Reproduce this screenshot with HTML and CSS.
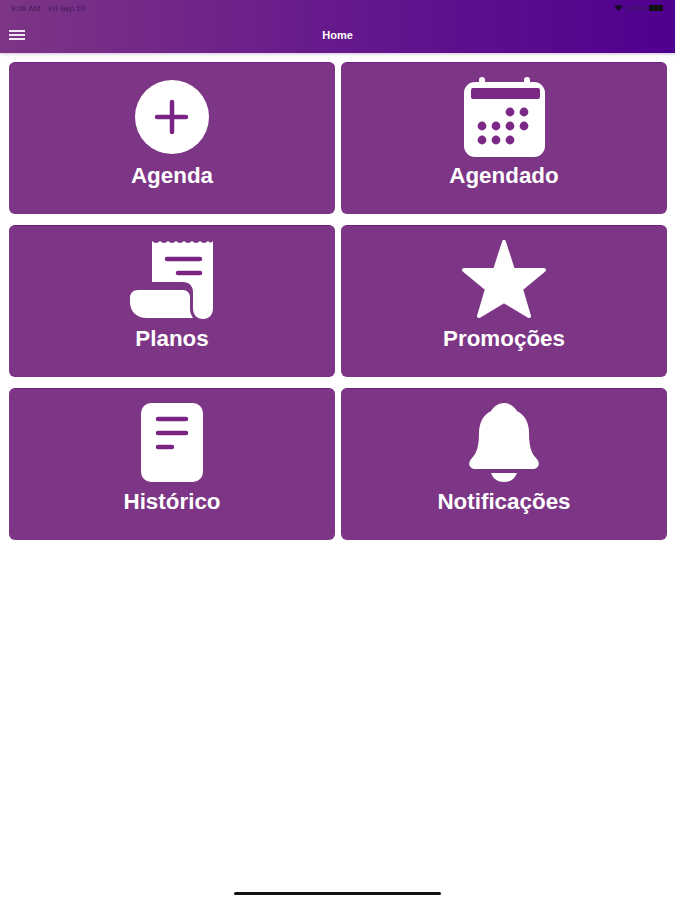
FILE: index.html
```html
<!DOCTYPE html>
<html lang="en">
<head>
	<meta charset="utf-8">
	<title>Home</title>
	<link rel="stylesheet" href="styles.css">
</head>
<body>
	<div class="page">
		<header class="top">
			<div class="status">
				<span class="status-time">9:09 AM<b></b>Fri Sep 10</span>
				<span class="status-right">
					<svg class="wifi" viewBox="0 0 10 7"><path d="M0 1.5C3 -0.5 7 -0.5 10 1.5L5 7Z"/></svg>
					<span>100%</span>
					<i class="battery"></i>
				</span>
			</div>
			<div class="nav">
				<div class="menu"><i></i><i></i><i></i></div>
				<div class="title">Home</div>
			</div>
		</header>

		<main class="grid">
			<a class="card">
				<svg class="icon" viewBox="0 0 90 80">
					<circle cx="45" cy="40" r="37" fill="#fff"/>
					<path class="cut" d="M30 40H59M45 25V55"/>
				</svg>
				<span class="label">Agenda</span>
			</a>
			<a class="card">
				<svg class="icon" viewBox="0 0 90 80">
					<path d="M23 9V3M68 9V3" stroke="#fff" stroke-width="6" stroke-linecap="round"/>
					<rect x="5" y="5" width="81" height="75" rx="11" fill="#fff"/>
					<rect x="12" y="11" width="69" height="11" rx="2" class="dot"/>
					<g class="dot">
						<circle cx="51" cy="35" r="4.4"/><circle cx="65" cy="35" r="4.4"/>
						<circle cx="23" cy="49" r="4.4"/><circle cx="37" cy="49" r="4.4"/><circle cx="51" cy="49" r="4.4"/><circle cx="65" cy="49" r="4.4"/>
						<circle cx="23" cy="63" r="4.4"/><circle cx="37" cy="63" r="4.4"/><circle cx="51" cy="63" r="4.4"/>
					</g>
				</svg>
				<span class="label">Agendado</span>
			</a>
			<a class="card">
				<svg class="icon" viewBox="0 0 90 80">
					<path fill="#fff" d="M25 1Q29 5 33 1Q37 5 41 1Q45 5 49 1Q53 5 57 1Q61 5 65 1Q69 5 73 1Q77 5 81 1Q84 4 86 1V68C86 75 82 79 76 79C70 79 66 75 66 68V52C66 46 62 42 56 42H25Z"/>
					<path fill="#fff" d="M11 50H56C60 50 63 53 63 57V70C63 73 65 76 66 78H20C10 78 3 72 3 62V58C3 53 6 50 11 50Z"/>
					<path class="cut" d="M40 19H73M51 33H73"/>
				</svg>
				<span class="label">Planos</span>
			</a>
			<a class="card">
				<svg class="icon" viewBox="0 0 90 80">
					<polygon fill="#fff" stroke="#fff" stroke-width="4" stroke-linejoin="round" points="45,2 54,30 85,30 62,49 70,76 45,61 20,76 28,49 5,30 36,30"/>
				</svg>
				<span class="label">Promoções</span>
			</a>
			<a class="card">
				<svg class="icon" viewBox="0 0 90 80">
					<rect x="14" y="0" width="62" height="79" rx="10" fill="#fff"/>
					<path class="cut" d="M31 16H59M31 30H59M31 44H45"/>
				</svg>
				<span class="label">Histórico</span>
			</a>
			<a class="card">
				<svg class="icon" viewBox="0 0 90 80">
					<path fill="#fff" d="M45 0C50 0 55 3 58 8C66 12 70 20 70 30C70 42 72 50 77 55C82 60 80 66 73 66H17C10 66 8 60 13 55C18 50 20 42 20 30C20 20 24 12 32 8C35 3 40 0 45 0Z"/>
					<path fill="#fff" d="M32 70H58C56 76 51 79 45 79C39 79 34 76 32 70Z"/>
				</svg>
				<span class="label">Notificações</span>
			</a>
		</main>

		<div class="home-bar"><i></i></div>
	</div>
</body>
</html>
```
FILE: styles.css
```css
* {padding: 0; margin: 0; box-sizing: border-box;}
html, body {height: 100%; background: #fff;}
body {
	font-family: "Liberation Sans", Arial, sans-serif;
	overflow: hidden;
}
.page {
	height: 900px;
	display: flex;
	flex-direction: column;
}

/* top bar */
.top {
	height: 53px;
	background: linear-gradient(90deg, #7d3585 0%, #65198c 50%, #4e008f 100%);
	box-shadow: 0 1px 3px rgba(80, 0, 120, 0.25);
}
.status {
	height: 16px;
	padding: 0 12px 0 11px;
	display: flex;
	justify-content: space-between;
	align-items: center;
	font-size: 8px;
	color: #3a1a50;
	filter: blur(0.5px);
}
.status-time b {
	display: inline-block;
	width: 8px;
}
.status-right {
	display: flex;
	align-items: center;
	gap: 3px;
}
.wifi {
	width: 9px;
	height: 6px;
	fill: #1c0a2c;
}
.battery {
	display: block;
	width: 14px;
	height: 6px;
	background: #111;
}
.nav {
	height: 37px;
	padding-left: 9px;
	display: flex;
	align-items: center;
	position: relative;
}
.menu {
	width: 16px;
	display: flex;
	flex-direction: column;
	gap: 2.5px;
	margin-top: 1px;
}
.menu i {
	display: block;
	height: 1.5px;
	background: #f2e6f4;
}
.title {
	position: absolute;
	left: 0;
	right: 0;
	top: 13px;
	text-align: center;
	font-size: 11px;
	line-height: 13px;
	font-weight: bold;
	color: #fff;
}

/* menu cards */
.grid {
	display: grid;
	grid-template-columns: 326px 326px;
	grid-auto-rows: 152.3px;
	column-gap: 6px;
	row-gap: 10.5px;
	padding: 9px 8px 0 9px;
}
.card {
	background: #7d3585;
	border-top: 1px solid #701c80;
	border-radius: 6px;
	padding-top: 14px;
	display: flex;
	flex-direction: column;
	align-items: center;
}
.icon {
	width: 90px;
	height: 80px;
	display: block;
}
.cut {
	fill: none;
	stroke: #7a2585;
	stroke-width: 4.5;
	stroke-linecap: round;
}
.dot {
	fill: #7a2a85;
}
.label {
	margin-top: 7px;
	font-size: 22.4px;
	line-height: 24px;
	font-weight: bold;
	color: #fff;
}

.home-bar {
	margin-top: auto;
	height: 8px;
	display: flex;
	justify-content: center;
}
.home-bar i {
	display: block;
	width: 207px;
	height: 3px;
	border-radius: 2px;
	background: #111;
}
```
